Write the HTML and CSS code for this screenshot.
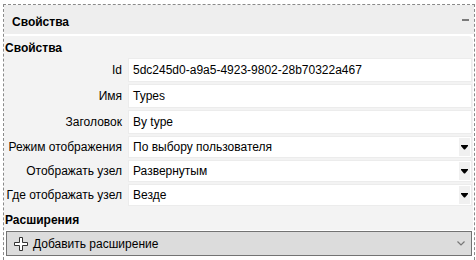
FILE: index.html
```html
<!DOCTYPE html>
<html lang="ru">
<head>
    <meta charset="UTF-8">
    <title>Свойства</title>
    <link rel="stylesheet" href="styles.css">
</head>
<body>
    <div class="frame">
        <div class="panel-header">
            <span>Свойства</span>
            <span class="collapse"></span>
        </div>
        <div class="section">
            <div class="section-title">Свойства</div>
            <div class="row">
                <div class="label">Id</div>
                <div class="value">5dc245d0-a9a5-4923-9802-28b70322a467</div>
            </div>
            <div class="row">
                <div class="label">Имя</div>
                <div class="value">Types</div>
            </div>
            <div class="row">
                <div class="label">Заголовок</div>
                <div class="value">By type</div>
            </div>
            <div class="row combo">
                <div class="label">Режим отображения</div>
                <div class="value">
                    <span>По выбору пользователя</span>
                    <span class="drop"><svg width="7" height="5" viewBox="0 0 7 5"><path d="M0 0H7V1L4 4.5H3L0 1Z" fill="#000"/></svg></span>
                </div>
            </div>
            <div class="row combo">
                <div class="label">Отображать узел</div>
                <div class="value">
                    <span>Развернутым</span>
                    <span class="drop"><svg width="7" height="5" viewBox="0 0 7 5"><path d="M0 0H7V1L4 4.5H3L0 1Z" fill="#000"/></svg></span>
                </div>
            </div>
            <div class="row combo">
                <div class="label">Где отображать узел</div>
                <div class="value">
                    <span>Везде</span>
                    <span class="drop"><svg width="7" height="5" viewBox="0 0 7 5"><path d="M0 0H7V1L4 4.5H3L0 1Z" fill="#000"/></svg></span>
                </div>
            </div>
            <div class="section-title ext">Расширения</div>
        </div>
        <div class="add-button">
            <svg class="plus" width="16" height="16" viewBox="0 0 16 16">
                <path d="M6.5 1.5H9.5V6.5H14.5V9.5H9.5V14.5H6.5V9.5H1.5V6.5H6.5Z" fill="#fff" stroke="#333" stroke-width="1"/>
            </svg>
            <span class="add-text">Добавить расширение</span>
            <svg class="chevron" width="8" height="5" viewBox="0 0 8 5">
                <path d="M0.5 0.5L4 4L7.5 0.5" fill="none" stroke="#777" stroke-width="1.2"/>
            </svg>
        </div>
    </div>
</body>
</html>
```

FILE: styles.css
```css
body {
    margin: 0;
    font-family: "Liberation Sans", Arial, sans-serif;
    font-size: 12px;
    color: #000;
    background-color: #fff;
    overflow: hidden;
}
.frame {
    margin: 4px 1px 0 3px;
    height: 260px;
    border: 1px dashed #8a8a8a;
    border-bottom: none;
}
.panel-header {
    display: flex;
    justify-content: space-between;
    align-items: center;
    height: 24px;
    padding: 5px 5px 0 8px;
    background-color: #eeeeee;
    font-weight: bold;
}
.collapse {
    width: 7px;
    height: 2px;
    margin-top: -4px;
    background-color: #7a7a7a;
}
.section {
    margin: 2px 1px 0 0;
    background-color: #f3f3f3;
    border-top-right-radius: 5px;
}
.section-title {
    height: 20px;
    line-height: 20px;
    padding: 2px 0 0 1px;
    font-weight: bold;
}
.section-title.ext {
    height: 20px;
    line-height: 20px;
}
.row {
    display: grid;
    grid-template-columns: 124px 1fr;
    height: 24px;
    margin-bottom: 2px;
}
.row.combo {
    height: 22px;
}
.label {
    text-align: right;
    line-height: 24px;
    padding-right: 6px;
}
.row.combo .label {
    line-height: 22px;
}
.value {
    display: flex;
    justify-content: space-between;
    align-items: center;
    margin-right: 1px;
    padding-left: 4px;
    background-color: #fff;
    border: 1px solid #ececec;
}
.drop {
    display: flex;
    align-items: center;
    justify-content: center;
    width: 11px;
    height: 18px;
    margin-right: 1px;
    background-color: #f0f0f0;
}
.add-button {
    display: flex;
    align-items: center;
    height: 23px;
    margin: 1px 2px 0 2px;
    padding: 0 6px 0 6px;
    background-color: #dcdcdc;
    border: 1px solid #737373;
}
.plus {
    margin-right: 4px;
}
.add-text {
    flex: 1;
}
```
